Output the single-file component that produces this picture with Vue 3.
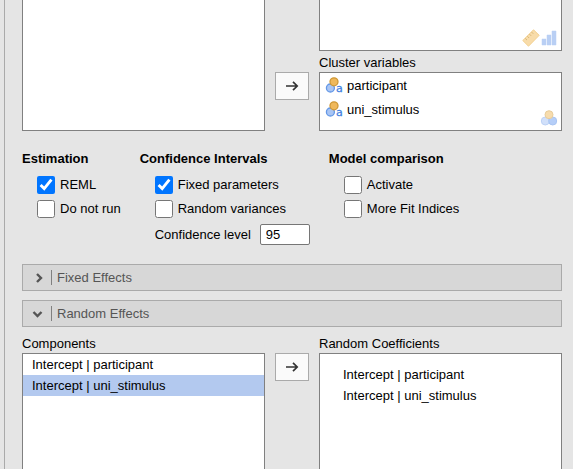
<script setup>
import { ref, reactive } from 'vue'

const clusterVariables = ['participant', 'uni_stimulus']
const components = ['Intercept | participant', 'Intercept | uni_stimulus']
const coefficients = ['Intercept | participant', 'Intercept | uni_stimulus']

const selected = ref(1)
const level = ref('95')

const groups = reactive([
  {
    title: 'Estimation',
    options: [
      { id: 'reml', label: 'REML', on: true },
      { id: 'donotrun', label: 'Do not run', on: false }
    ]
  },
  {
    title: 'Confidence Intervals',
    level: true,
    options: [
      { id: 'fixedparams', label: 'Fixed parameters', on: true },
      { id: 'randomvars', label: 'Random variances', on: false }
    ]
  },
  {
    title: 'Model comparison',
    options: [
      { id: 'activate', label: 'Activate', on: false },
      { id: 'morefit', label: 'More Fit Indices', on: false }
    ]
  }
])
</script>

<template>
  <main class="panel">
    <section class="supplier">
      <div class="box open-top"></div>
      <div class="middle low">
        <button class="move" type="button" aria-label="Move to cluster variables">
          <svg width="14" height="12" viewBox="0 0 14 12"><path d="M1 6H12M8 1.8L12.2 6L8 10.2" /></svg>
        </button>
      </div>
      <div class="stack">
        <div class="box open-top targets">
          <div class="permitted">
            <svg width="18" height="18" viewBox="0 0 18 18">
              <path d="M11.5 .8L17.2 6.3L6.5 17.2L.8 11.5Z" fill="#f8dcaa" stroke="#f2d090" />
              <path d="M9.5 3L11.3 4.8M7.4 5.1L9.2 6.9M5.3 7.2L7.1 9M3.2 9.3L5 11.1" stroke="#dcb977" fill="none" />
            </svg>
            <svg width="18" height="18" viewBox="0 0 18 18">
              <path d="M2 10h4v6H2zM7 6h4v10H7zM12 2h4v14h-4z" fill="#b9cff4" stroke="#dbe7fb" stroke-width="1" paint-order="stroke" />
            </svg>
          </div>
        </div>
        <h3 class="label">Cluster variables</h3>
        <div class="box cluster">
          <ul class="variables">
            <li v-for="name in clusterVariables" :key="name">
              <svg width="20" height="18" viewBox="0 0 20 18">
                <circle cx="5.4" cy="12" r="4" fill="#a9c5f4" stroke="#6498e6" stroke-width="1.3" />
                <circle cx="9" cy="5.8" r="4" fill="#efb85b" stroke="#cf9836" stroke-width="1.3" />
                <text x="11" y="16" class="tag">a</text>
              </svg>
              <span>{{ name }}</span>
            </li>
          </ul>
          <div class="permitted">
            <svg width="18" height="18" viewBox="0 0 18 18">
              <circle cx="5.3" cy="12" r="4" fill="#d1e0fa" stroke="#bdd2f6" />
              <circle cx="12.7" cy="12" r="4" fill="#b5cef8" stroke="#a9c5f2" />
              <circle cx="9" cy="5.7" r="4" fill="#f7dcad" stroke="#e8cd9b" />
            </svg>
          </div>
        </div>
      </div>
    </section>

    <section class="options">
      <div v-for="group in groups" :key="group.title" class="group">
        <h2>{{ group.title }}</h2>
        <div class="rows">
          <div v-for="option in group.options" :key="option.id" class="row">
            <input :id="option.id" v-model="option.on" type="checkbox">
            <label :for="option.id">{{ option.label }}</label>
          </div>
          <div v-if="group.level" class="row level">
            <label for="level">Confidence level</label>
            <input id="level" v-model="level" type="text">
          </div>
        </div>
      </div>
    </section>

    <button class="header" type="button" aria-expanded="false">
      <svg width="14" height="13" viewBox="0 0 14 13"><path d="M5 3L9 7L5 11" /></svg>
      <span class="divider"></span>
      <span>Fixed Effects</span>
    </button>
    <button class="header" type="button" aria-expanded="true">
      <svg width="14" height="13" viewBox="0 0 14 13"><path d="M1.5 5L5.5 9L9.5 5" /></svg>
      <span class="divider"></span>
      <span>Random Effects</span>
    </button>

    <section class="supplier fill">
      <div class="stack">
        <h3 class="label">Components</h3>
        <ul class="box open-bottom terms">
          <li
            v-for="(term, i) in components"
            :key="term"
            :class="{ selected: selected === i }"
            @click="selected = i"
          >{{ term }}</li>
        </ul>
      </div>
      <div class="middle">
        <button class="move" type="button" aria-label="Move to random coefficients">
          <svg width="14" height="12" viewBox="0 0 14 12"><path d="M1 6H12M8 1.8L12.2 6L8 10.2" /></svg>
        </button>
      </div>
      <div class="stack">
        <h3 class="label">Random Coefficients</h3>
        <ul class="box open-bottom terms indented">
          <li v-for="term in coefficients" :key="term">{{ term }}</li>
        </ul>
      </div>
    </section>
  </main>
</template>

<style>
body {
  margin: 0;
  background: #e5e5e5;
}
</style>

<style scoped>
.panel {
  box-sizing: border-box;
  min-height: 100vh;
  margin-left: 4px;
  padding: 0 11px 0 17px;
  border-left: 1px solid #aaa;
  display: flex;
  flex-direction: column;
  background: #e5e5e5;
  color: #000;
  font: 13px/15px "Liberation Sans", Arial, sans-serif;
}
.panel * {
  box-sizing: border-box;
}
h2, h3, ul {
  margin: 0;
  padding: 0;
  font-size: 13px;
  list-style: none;
}
svg {
  display: block;
  flex: none;
}
.supplier {
  display: grid;
  grid-template-columns: 1fr 34px 1fr;
  column-gap: 10px;
}
.fill {
  flex: 1;
  margin-top: 5px;
}
.stack {
  display: flex;
  flex-direction: column;
}
.box {
  border: 1px solid #808080;
  background: #fff;
}
.open-top {
  border-top: 0;
}
.open-bottom {
  border-bottom: 0;
}
.targets {
  height: 51px;
  display: flex;
  align-items: flex-end;
  justify-content: flex-end;
}
.label {
  padding: 4px 0 2px;
  font-weight: normal;
}
.cluster {
  display: flex;
  align-items: flex-end;
  justify-content: space-between;
  height: 59px;
}
.variables {
  align-self: flex-start;
  padding-left: 5px;
}
.variables li {
  display: flex;
  align-items: center;
  gap: 2px;
  height: 24px;
}
.tag {
  font: 11px "DejaVu Sans", sans-serif;
  fill: #3f7fe0;
  stroke: #3f7fe0;
  stroke-width: 0.3;
}
.permitted {
  display: flex;
  padding: 3px;
}
.middle {
  padding-top: 17px;
}
.middle.low {
  padding-top: 72px;
}
.fill .middle {
  padding-top: 21px;
}
.move {
  display: flex;
  align-items: center;
  justify-content: center;
  width: 100%;
  height: 28px;
  padding: 0;
  border: 1px solid #aaa;
  background: #fafafa;
}
.move path {
  fill: none;
  stroke: #333;
  stroke-width: 1.7;
}
.options {
  display: flex;
  gap: 19px;
  padding: 20px 0 16px;
}
.rows {
  padding: 7px 0 0 15px;
}
.row {
  display: flex;
  align-items: center;
  gap: 5px;
  height: 24px;
}
.row label {
  padding-bottom: 1px;
}
.row input[type="checkbox"] {
  width: 18px;
  height: 18px;
  margin: 0;
}
.level {
  gap: 9px;
  height: 27px;
}
.level input {
  width: 50px;
  height: 21px;
  padding: 0 5px;
  border: 1px solid #767676;
  border-radius: 2px;
  background: #fff;
  color: #000;
  font: inherit;
}
.header {
  display: flex;
  align-items: center;
  gap: 5px;
  height: 27px;
  padding: 0 9px;
  border: 1px solid #aaa;
  background: #d7d7d7;
  color: #555;
  font: inherit;
  text-align: left;
}
.header + .header {
  margin-top: 9px;
}
.header path {
  fill: none;
  stroke: #555;
  stroke-width: 2.4;
}
.divider {
  width: 1px;
  height: 15px;
  background: #808080;
}
.terms {
  flex: 1;
}
.terms li {
  padding: 3px 9px;
}
.terms .selected {
  background: #b3c9ef;
}
.indented {
  padding-top: 10px;
}
.indented li {
  padding-left: 23px;
}
</style>
